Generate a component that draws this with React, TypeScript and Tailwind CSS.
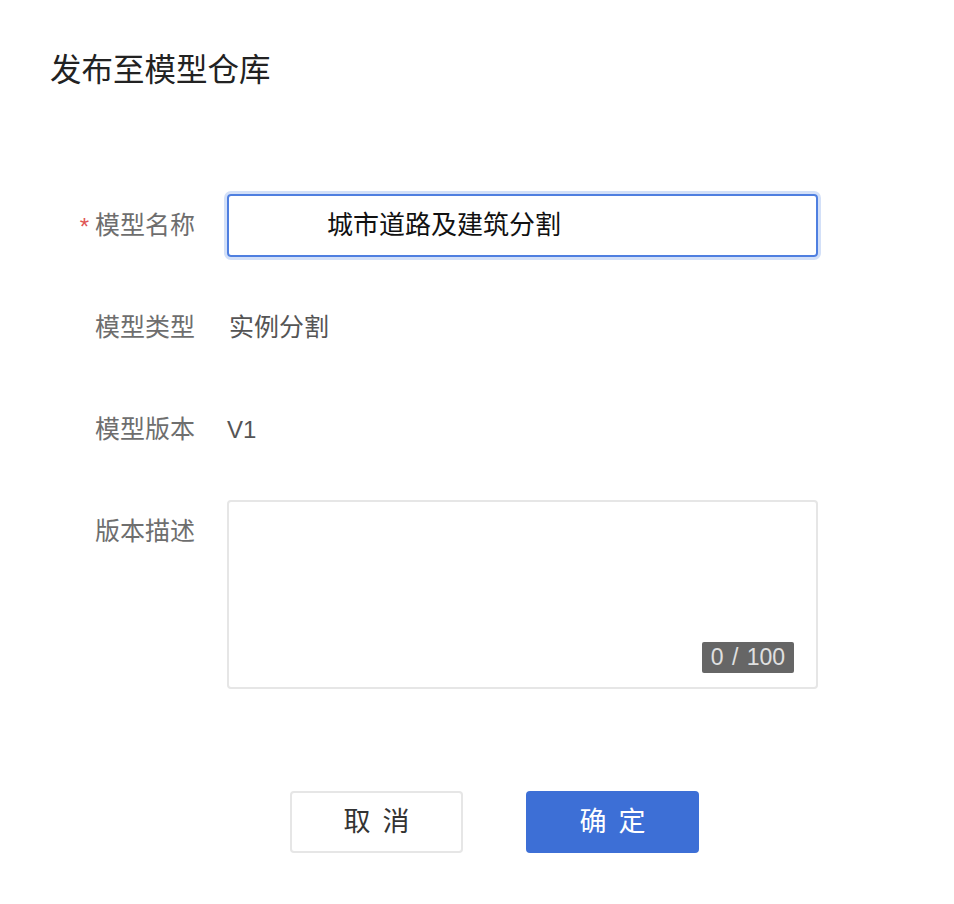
const font = "font-['Liberation_Sans','Noto_Sans_CJK_SC',sans-serif]";

function Label({ children, required }: { children: string; required?: boolean }) {
  return (
    <div className="flex h-[63px] items-center justify-end text-[25px] text-[#6e6e6e]">
      {required && <span className="mr-[6px] mt-[2px] text-[24px] text-[#e05555]">*</span>}
      {children}
    </div>
  );
}

export default function App() {
  return (
    <div className={`min-h-[904px] w-[954px] bg-white pl-[50px] pt-[50px] ${font}`}>
      <h1 className="text-[31.5px] leading-[40px] text-[#222]">发布至模型仓库</h1>

      <div className="mt-[104px] grid grid-cols-[145px_591px] gap-x-[32px] gap-y-[39px]">
        <Label required>模型名称</Label>
        <div className="flex h-[63px] items-center rounded-[4px] border-2 border-[#4f7fe0] pl-[98px] text-[26px] text-[#111] shadow-[0_0_0_3px_#d3e0f8]">
          城市道路及建筑分割
        </div>

        <Label>模型类型</Label>
        <div className="flex h-[63px] items-center pl-[2px] text-[25px] text-[#555]">实例分割</div>

        <Label>模型版本</Label>
        <div className="flex h-[63px] items-center text-[24px] text-[#555]">V1</div>

        <div className="self-start">
          <Label>版本描述</Label>
        </div>
        <div className="relative h-[189px] rounded-[4px] border-2 border-[#e6e6e6]">
          <span className="absolute bottom-[14px] right-[22px] flex h-[31px] w-[92px] items-center justify-center rounded-[2px] bg-[#666] text-[23px] text-[#e0e0e0] [word-spacing:2px]">
            0 / 100
          </span>
        </div>
      </div>

      <div className="ml-[240px] mt-[102px] flex gap-[63px]">
        <button className="flex h-[62px] w-[173px] items-center justify-center gap-[12px] rounded-[4px] border-2 border-[#e6e6e6] bg-white text-[27px] text-[#333]">
          <span>取</span>
          <span>消</span>
        </button>
        <button className="flex h-[62px] w-[173px] items-center justify-center gap-[12px] rounded-[4px] bg-[#3d6fd6] text-[27px] text-white">
          <span>确</span>
          <span>定</span>
        </button>
      </div>
    </div>
  );
}
